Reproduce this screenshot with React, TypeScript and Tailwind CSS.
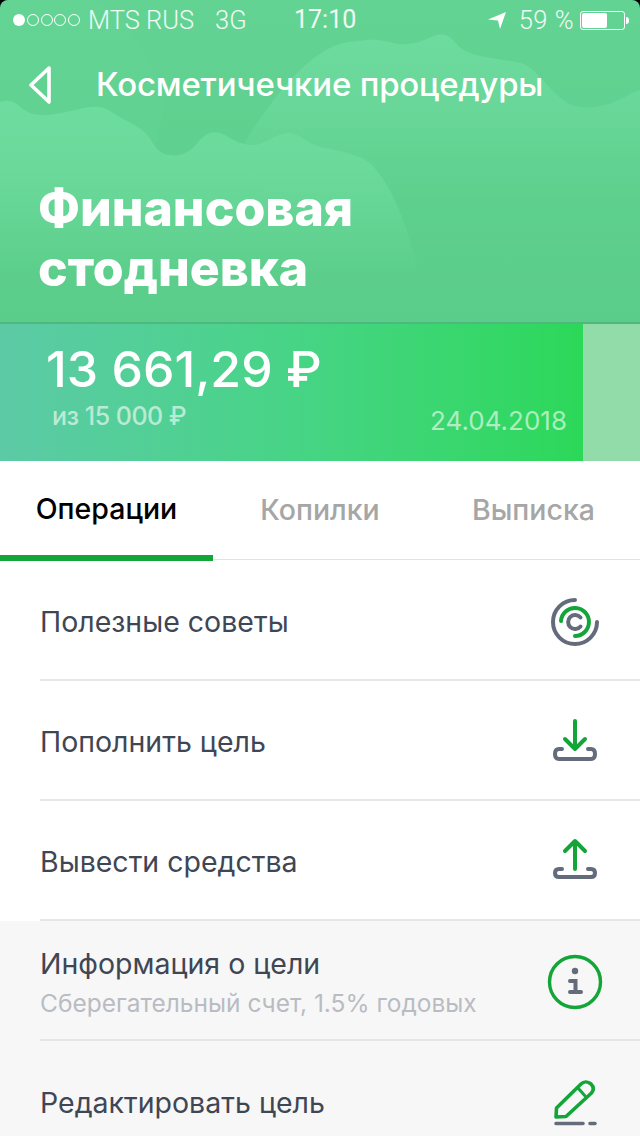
import type { ReactNode } from "react";

const StatusBar = () => (
  <div className="relative flex h-10 items-center text-[25.5px] font-light text-white/90 font-['Roboto',sans-serif]">
    <div className="ml-[13px] flex w-[67px] items-center justify-between">
      <span className="h-[12px] w-[12px] rounded-full bg-white" />
      {[0, 1, 2, 3].map((i) => (
        <span key={i} className="h-[12px] w-[12px] rounded-full border border-white" />
      ))}
    </div>
    <span className="ml-[8px] w-[127px]">MTS RUS</span>
    <span className="w-[79px]">3G</span>
    <span className="text-[25px] font-normal">17:10</span>
    <div className="ml-auto mr-[11px] flex items-center">
      <svg width="18" height="17" viewBox="0 0 18 17" className="mr-[13px]">
        <path d="M0 7.5 L18 0 L12 17 L10 8.5 Z" fill="white" />
      </svg>
      <span className="tracking-[0.5px]">59 %</span>
      <div className="ml-[6px] mr-[1px] flex h-[19px] w-[45px] items-center rounded-[3px] border border-white p-[1px]">
        <div className="h-full w-[25px] rounded-[2px] bg-white" />
      </div>
      <span className="h-[7px] w-[3px] rounded-r-sm bg-white" />
    </div>
  </div>
);

const Waves = () => (
  <svg viewBox="0 0 640 322" preserveAspectRatio="none" className="absolute inset-0 h-full w-full">
    <defs>
      <linearGradient id="ridgeA" x1="0" y1="100" x2="0" y2="275" gradientUnits="userSpaceOnUse">
        <stop offset="0" stopColor="#6edc9e" />
        <stop offset="0.4" stopColor="#6ad99a" />
        <stop offset="1" stopColor="#6ad99a" stopOpacity="0" />
      </linearGradient>
      <linearGradient id="ridgeB" x1="0" y1="36" x2="0" y2="200" gradientUnits="userSpaceOnUse">
        <stop offset="0" stopColor="#6edb9e" />
        <stop offset="1" stopColor="#6edb9e" stopOpacity="0" />
      </linearGradient>
    </defs>
    <path d="M0 0 H95 C120 10 130 30 140 45 C150 62 160 75 165 100 L155 150 H0 Z" fill="#6edc9e" opacity="0.15" />
    <path
      d="M240 150 C270 100 300 65 326 50 C345 40 355 42 367 40 C385 38 395 46 408 44 C425 43 435 32 445 35 C455 38 456 48 470 53 C485 58 495 58 502 60 C518 62 525 62 535 72 C548 85 555 95 566 102 C575 108 590 110 612 103 C625 98 632 92 640 90 V260 H300 Z"
      fill="url(#ridgeB)"
    />
    <path
      d="M0 102 C6 100 12 100 18 105 C26 112 32 115 42 115 C60 116 85 105 100 107 C110 109 115 115 125 120 C138 126 145 132 150 138 C155 148 160 154 170 155 C180 157 190 153 200 140 C207 133 213 131 220 133 C232 138 240 146 255 145 C268 143 278 132 290 133 C302 135 310 145 320 147 C345 152 362 155 372 165 C385 180 390 190 397 205 C408 230 415 255 425 300 H0 Z"
      fill="url(#ridgeA)"
    />
  </svg>
);

const SavingsIcon = () => (
  <svg width="48" height="48" viewBox="0 0 48 48" fill="none" className="mt-[5px]">
    <path d="M24 2 A22 22 0 1 0 46 24" stroke="#646b7a" strokeWidth="4" strokeLinecap="round" />
    <path d="M10 23 A14 14 0 1 1 24 38" stroke="#13a538" strokeWidth="4" strokeLinecap="round" />
    <path d="M29.5 19.5 A7 7 0 1 0 29.5 28.5" stroke="#646b7a" strokeWidth="4" strokeLinecap="round" />
  </svg>
);

const TrayIcon = ({ up }: { up?: boolean }) => (
  <svg width="44" height="44" viewBox="0 0 44 44" fill="none">
    <path
      d={up ? "M9 31 H6 C3 31 2 33 2 35 C2 37.5 3 39 6 39 H38 C41 39 42 37.5 42 35 C42 33 41 31 38 31 H35" : "M9 31 H6 C3 31 2 33 2 36 C2 39 3 41 6 41 H38 C41 41 42 39 42 36 C42 33 41 31 38 31 H35"}
      stroke="#646b7a"
      strokeWidth="4"
      strokeLinecap="round"
    />
    {up ? (
      <path d="M22 31 V3 M12 13 L22 3 L32 13" stroke="#13a538" strokeWidth="4" strokeLinecap="round" strokeLinejoin="round" />
    ) : (
      <path d="M22 3 V31 M12 21 L22 31 L32 21" stroke="#13a538" strokeWidth="4" strokeLinecap="round" strokeLinejoin="round" />
    )}
  </svg>
);

const InfoIcon = () => (
  <svg width="56" height="56" viewBox="0 0 56 56" fill="none" className="mt-[4px]">
    <circle cx="28" cy="28" r="25.5" stroke="#13a538" strokeWidth="3.4" />
    <circle cx="28" cy="17" r="3.2" fill="#646b7a" />
    <path d="M23 27 H28.5 V37.5 M23 38 H34" stroke="#646b7a" strokeWidth="4" strokeLinecap="round" />
  </svg>
);

const PencilIcon = () => (
  <svg width="44" height="46" viewBox="0 0 44 46" fill="none" className="mt-[3px]">
    <path d="M3 37 L3.5 28 L28 4 C31 1 35 1.5 38 4 C41 7 41 10 38.5 13 L13 36.5 Z" stroke="#13a538" strokeWidth="3.6" strokeLinejoin="round" />
    <path d="M25 8 L33 17" stroke="#13a538" strokeWidth="3" />
    <path d="M3 43.5 H30 M37 43.5 H42" stroke="#646b7a" strokeWidth="3.6" strokeLinecap="round" />
  </svg>
);

const Row = ({
  title,
  sub,
  icon,
  gray,
  last,
  first,
}: {
  title: string;
  sub?: string;
  icon: ReactNode;
  gray?: boolean;
  last?: boolean;
  first?: boolean;
}) => (
  <div className={gray ? "bg-[#f7f7f7] pl-10" : "bg-white pl-10"}>
    <div
      className={
        last
          ? "flex h-[120px] items-center pr-[37px]"
          : first
            ? "flex h-[121px] items-center border-b-2 border-[#e6e6e6] pr-[37px]"
            : "flex h-[120px] items-center border-b-2 border-[#e6e6e6] pr-[37px]"
      }
    >
      <div className={sub ? "flex-1 pt-[7px]" : "flex-1 pt-[4px]"}>
        <div className={sub ? "text-[28.5px] leading-[38px] text-[#3f4654]" : "text-[28.5px] leading-[36px] text-[#3f4654]"}>{title}</div>
        {sub && <div className="text-[24.5px] leading-[40px] text-[#b9bcc2]">{sub}</div>}
      </div>
      <div className="flex w-[56px] justify-center">{icon}</div>
    </div>
  </div>
);

export default function App() {
  return (
    <div className="h-[1136px] w-[640px] overflow-hidden bg-black font-['Inter',sans-serif]">
      <div className="relative h-[322px] overflow-hidden rounded-t-[8px] bg-gradient-to-b from-[#63d393] to-[#5bcd8a]">
        <Waves />
        <div className="relative">
          <StatusBar />
          <div className="mt-[23px] flex h-[44px] items-center">
            <svg width="24" height="38" viewBox="0 0 24 38" fill="none" className="ml-[28px]">
              <path d="M21 2 L3 19 L21 36 Z" stroke="white" strokeWidth="3.6" strokeLinejoin="round" />
            </svg>
            <span className="ml-[44px] text-[33px] font-medium tracking-[-0.2px] text-white">Косметичечкие процедуры</span>
          </div>
          <div className="ml-[38px] mt-[71px] text-[50px] font-extrabold leading-[60px] text-white">
            Финансовая
            <br />
            стодневка
          </div>
        </div>
      </div>
      <div className="flex h-[139px] border-t-2 border-[#4fb87e] bg-[#91dca9]">
        <div className="flex w-[583px] bg-gradient-to-r from-[#5ccaa6] via-[#47d486] to-[#2bd858] text-white">
          <div className="ml-[46px] mt-[15px]">
            <div className="text-[50px] font-medium leading-[60px]">13 661,29 ₽</div>
            <div className="ml-[6px] mt-[3px] text-[25px] font-medium leading-[28px] tracking-[-0.5px] text-white/60">из 15 000 ₽</div>
          </div>
          <div className="ml-auto mr-[16px] mt-[81px] text-[26px] leading-[32px] text-white/60">24.04.2018</div>
        </div>
      </div>
      <div className="relative flex h-[99px] border-b border-[#e2e2e2] bg-white text-[28.5px] font-medium">
        <div className="relative z-10 -mb-[2px] flex w-[213px] items-center justify-center border-b-[6px] border-[#13a538] pt-[3px] text-black">
          <span>Операции</span>
        </div>
        <div className="flex w-[214px] items-center justify-center text-[#a6a6a6]">Копилки</div>
        <div className="flex w-[213px] items-center justify-center text-[#a6a6a6]">Выписка</div>
      </div>
      <Row title="Полезные советы" icon={<SavingsIcon />} first />
      <Row title="Пополнить цель" icon={<TrayIcon />} />
      <Row title="Вывести средства" icon={<TrayIcon up />} />
      <Row title="Информация о цели" sub="Сберегательный счет, 1.5% годовых" icon={<InfoIcon />} gray />
      <Row title="Редактировать цель" icon={<PencilIcon />} gray last />
    </div>
  );
}
